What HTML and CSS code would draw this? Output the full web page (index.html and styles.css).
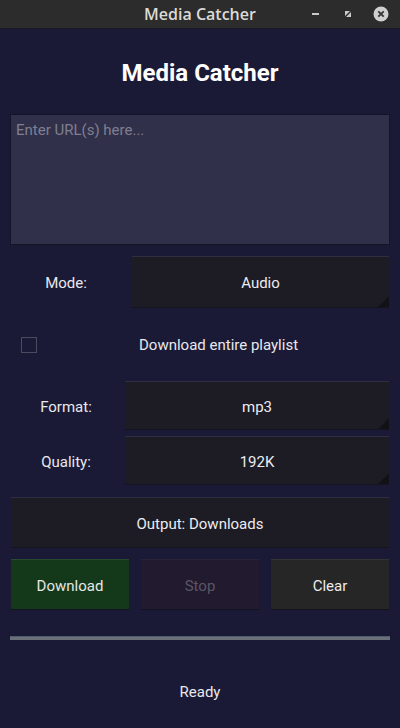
FILE: index.html
```html
<!DOCTYPE html>
<html>
<head>
<meta charset="utf-8">
<link rel="stylesheet" href="styles.css">
</head>
<body>
<div class="window">
  <div class="titlebar">
    <span class="title">Media Catcher</span>
    <div class="wctrls">
      <svg class="wicon" width="14" height="14" viewBox="0 0 14 14"><rect x="3" y="6" width="7" height="2" fill="#c9c9c9"/></svg>
      <svg class="wicon" width="14" height="14" viewBox="0 0 14 14"><path d="M4 4 L9 4 L4 9 Z M10 10 L5 10 L10 5 Z" fill="#c9c9c9"/></svg>
      <svg class="wicon close" width="16" height="16" viewBox="0 0 16 16"><circle cx="8" cy="8" r="7.5" fill="#cfcfcf"/><path d="M5.3 5.3 L10.7 10.7 M10.7 5.3 L5.3 10.7" stroke="#333" stroke-width="1.8"/></svg>
    </div>
  </div>
  <main class="app">
    <h1 class="heading">Media Catcher</h1>
    <div class="urlbox"><span class="placeholder">Enter URL(s) here...</span></div>
    <div class="row row-mode">
      <span class="label">Mode:</span>
      <div class="combo combo-mode">Audio</div>
    </div>
    <div class="row row-check">
      <span class="checkbox"></span>
      <span class="checklabel">Download entire playlist</span>
    </div>
    <div class="row row-format">
      <span class="label">Format:</span>
      <div class="combo combo-format">mp3</div>
    </div>
    <div class="row row-quality">
      <span class="label">Quality:</span>
      <div class="combo combo-format">192K</div>
    </div>
    <div class="btn output">Output: Downloads</div>
    <div class="actions">
      <div class="btn download">Download</div>
      <div class="btn stop">Stop</div>
      <div class="btn clear">Clear</div>
    </div>
    <div class="progress"></div>
    <div class="status">Ready</div>
  </main>
</div>
</body>
</html>
```
FILE: styles.css
```css
* { box-sizing: border-box; }
html, body { margin: 0; padding: 0; }
body {
  width: 400px;
  height: 728px;
  background: #1b1a36;
  font-family: Roboto, "Liberation Sans", sans-serif;
  color: #e6e6ea;
  overflow: hidden;
}
.window { display: flex; flex-direction: column; height: 728px; }
.titlebar {
  height: 29px;
  background: #2c2c2c;
  border-bottom: 1px solid #1a1a24;
  display: flex;
  align-items: center;
  justify-content: center;
  position: relative;
}
.title {
  font-family: "Open Sans", "DejaVu Sans", sans-serif;
  font-size: 16px;
  font-weight: 600;
  color: #dcdad5;
}
.wctrls {
  position: absolute;
  right: 11px;
  top: 6px;
  display: flex;
  align-items: center;
  gap: 18px;
}
.wicon { display: block; }
.app {
  display: flex;
  flex-direction: column;
  padding: 0 10px;
}
.heading {
  margin: 30px 0 0;
  height: 28px;
  line-height: 28px;
  font-size: 24px;
  font-weight: 700;
  text-align: center;
  color: #ffffff;
}
.urlbox {
  margin-top: 27px;
  height: 131px;
  background: #30304a;
  border: 1px solid #141426;
  padding: 5px 5px;
}
.placeholder { font-size: 15px; color: #7f7f8f; line-height: 20px; }
.row { display: flex; align-items: center; }
.label {
  width: 112px;
  text-align: center;
  font-size: 15px;
  color: #e8e8ec;
  padding-top: 2px;
}
.combo {
  position: relative;
  background: #1d1c24;
  border-top: 1px solid #2f2e42;
  border-bottom: 1px solid #141420;
  display: flex;
  align-items: center;
  justify-content: center;
  font-size: 15px;
  color: #ececf0;
  padding-top: 2px;
}
.combo::after {
  content: "";
  position: absolute;
  right: 0;
  bottom: 0;
  width: 0;
  height: 0;
  border-left: 11px solid transparent;
  border-bottom: 11px solid #111116;
}
.row-mode { margin-top: 11px; }
.combo-mode { margin-left: 10px; width: 257px; height: 52px; }
.row-check { height: 73px; }
.checkbox {
  width: 16px;
  height: 16px;
  border: 1px solid #4b4b5e;
  margin-left: 11px;
}
.checklabel { margin-left: 102px; font-size: 15px; color: #e8e8ec; padding-top: 1px; }
.combo-format { margin-left: 3px; width: 264px; height: 49px; }
.row-quality { margin-top: 6px; }
.btn {
  display: flex;
  align-items: center;
  justify-content: center;
  font-size: 15px;
  height: 51px;
  border-top: 1px solid #2f2e42;
  border-bottom: 1px solid #141420;
  padding-top: 2px;
}
.output {
  margin: 12px 1px 0;
  background: #1d1c24;
  color: #ececf0;
}
.actions {
  margin: 11px 1px 0;
  display: flex;
  gap: 12px;
}
.actions .btn { width: 118px; }
.download { background: #13391a; color: #e6e6e6; border-top-color: #2a4a2e; }
.stop { background: #221a2e; color: #5a5668; border-top-color: #2a2238; }
.clear { background: #262626; color: #ececec; border-top-color: #333333; }
.progress {
  margin-top: 26px;
  height: 4px;
  background: #6a707a;
  border-top: 1px solid #4e5c6e;
}
.status {
  margin-top: 43px;
  text-align: center;
  font-size: 15px;
  color: #e8e8ec;
}
```
